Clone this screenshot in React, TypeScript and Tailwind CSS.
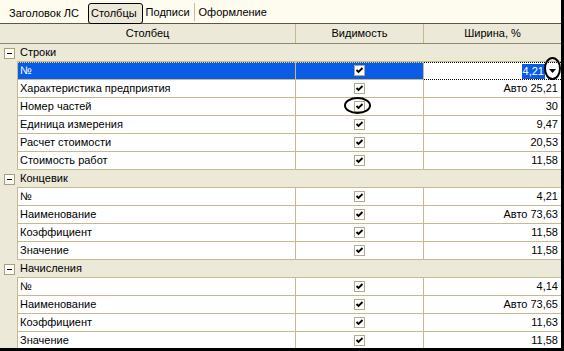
import React from "react";

type Row = [string, string];
type Group = { name: string; rows: Row[] };

const groups: Group[] = [
  {
    name: "Строки",
    rows: [
      ["№", "4,21"],
      ["Характеристика предприятия", "Авто 25,21"],
      ["Номер частей", "30"],
      ["Единица измерения", "9,47"],
      ["Расчет стоимости", "20,53"],
      ["Стоимость работ", "11,58"],
    ],
  },
  {
    name: "Концевик",
    rows: [
      ["№", "4,21"],
      ["Наименование", "Авто 73,63"],
      ["Коэффициент", "11,58"],
      ["Значение", "11,58"],
    ],
  },
  {
    name: "Начисления",
    rows: [
      ["№", "4,14"],
      ["Наименование", "Авто 73,65"],
      ["Коэффициент", "11,63"],
      ["Значение", "11,58"],
    ],
  },
];

const Check = () => (
  <span className="flex h-[11px] w-[11px] items-center justify-center border border-[#b2ab8c] bg-white">
    <svg width="9" height="9" viewBox="0 0 9 9">
      <path d="M1.5 4 L3.5 6 L7.5 2" fill="none" stroke="#000" strokeWidth="1.8" />
    </svg>
  </span>
);

const GroupRow = ({ name }: { name: string }) => (
  <div className="flex h-[18px] bg-[#ece9d8]">
    {/* кнопка свертки */}
    <div className="flex w-[17px] items-center pl-[4px]">
      <span className="flex h-[11px] w-[11px] items-center justify-center border border-[#a89f7c] bg-[#fcfcf6]">
        <span className="h-px w-[5px] bg-black" />
      </span>
    </div>
    <div className="flex flex-1 items-center border-b border-[#c4b98f] pl-[3px]">{name}</div>
  </div>
);

const DataRow = ({ row, selected, circled }: { row: Row; selected?: boolean; circled?: boolean }) => (
  <div className="flex h-[18px]">
    <div className="w-[17px] bg-[#ece9d8]" />
    <div
      className={
        selected
          ? "relative flex w-[279px] items-center border-b border-l border-r border-[#c4b98f] bg-[#0a5ce6] pl-[2px] text-white"
          : "flex w-[279px] items-center border-b border-l border-r border-[#c4b98f] bg-white pl-[2px]"
      }
    >
      {selected && <div className="pointer-events-none absolute inset-x-0 top-0 border-t border-dotted border-[#f5d36a]" />}
      {row[0]}
    </div>
    <div
      className={
        selected
          ? "relative flex w-[128px] items-center justify-center border-b border-r border-[#c4b98f] bg-[#0a5ce6]"
          : "relative flex w-[128px] items-center justify-center border-b border-r border-[#c4b98f] bg-white"
      }
    >
      {selected && <div className="pointer-events-none absolute inset-x-0 top-0 border-t border-dotted border-[#f5d36a]" />}
      <Check />
      {circled && (
        <div className="pointer-events-none absolute left-[48px] top-[-1px] h-[17px] w-[27px] rounded-[50%] border-2 border-black" />
      )}
    </div>
    {selected ? (
      <div className="relative flex flex-1 items-center justify-end border-y border-dotted border-black bg-white pr-[16px]">
        <span className="bg-[#0a5ce6] px-px py-[2px] text-white">{row[1]}</span>
        <svg className="absolute right-[5px] top-[6px]" width="7" height="4" viewBox="0 0 7 4">
          <path d="M0 0 H7 L3.5 4 Z" fill="#000" />
        </svg>
        <div className="pointer-events-none absolute right-0 top-[-6px] h-[23px] w-[17px] rounded-[50%] border-2 border-black" />
      </div>
    ) : (
      <div className="flex flex-1 items-center justify-end border-b border-[#c4b98f] bg-white pr-[3px]">{row[1]}</div>
    )}
  </div>
);

export default function App() {
  return (
    <div className="h-[351px] w-[564px] overflow-hidden bg-black font-['Liberation_Sans',Arial,sans-serif] text-[11px] leading-none text-black">
      <div className="h-[348px] w-[561px] overflow-hidden bg-[#ece9d8]">
        {/* вкладки */}
        <div className="flex h-[24px] items-start border-b border-[#5a584e] bg-[#fdfcef] pl-[4px]">
          <div className="mt-[3px] flex h-[20px] items-center pl-[5px] pr-[9px]">Заголовок ЛС</div>
          <div className="mt-[3px] flex h-[21px] items-center rounded-[3px] border border-black bg-[#ece9d8] pl-[2px] pr-[5px]">
            Столбцы
          </div>
          <div className="mt-[3px] flex h-[18px] items-center border-r border-[#c8bf98] pl-[3px] pr-[4px]">Подписи</div>
          <div className="mt-[3px] flex h-[18px] items-center pl-[4px]">Оформление</div>
        </div>
        {/* заголовок таблицы */}
        <div className="flex h-[20px] border-b border-[#8f8a72]">
          <div className="flex w-[296px] items-center justify-center border-r border-[#c4b98f]">Столбец</div>
          <div className="flex w-[128px] items-center justify-center border-r border-[#c4b98f]">Видимость</div>
          <div className="flex flex-1 items-center justify-center">Ширина, %</div>
        </div>
        {groups.map((g, gi) => (
          <div key={g.name}>
            <GroupRow name={g.name} />
            {g.rows.map((r, ri) => (
              <DataRow key={ri} row={r} selected={gi === 0 && ri === 0} circled={gi === 0 && ri === 2} />
            ))}
          </div>
        ))}
      </div>
    </div>
  );
}
